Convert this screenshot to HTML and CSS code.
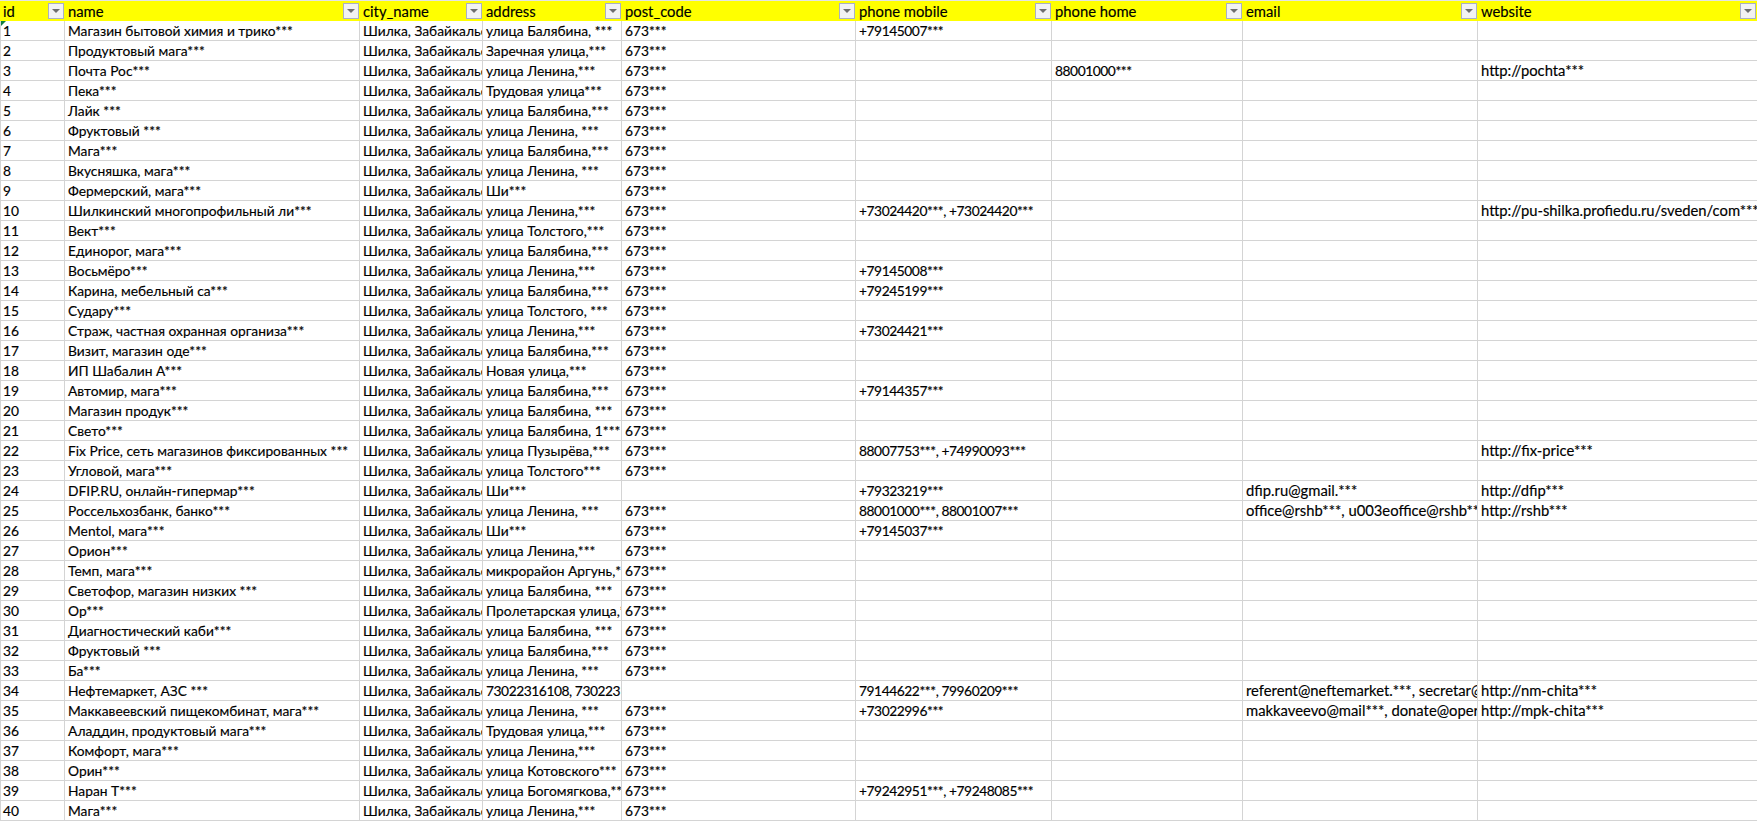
FILE: index.html
```html
<!DOCTYPE html>
<html lang="ru">
<head>
<meta charset="utf-8">
<title>Лист</title>
<link rel="stylesheet" href="styles.css">
</head>
<body>
<table class="sheet">
<colgroup><col class="c-id"><col class="c-name"><col class="c-city"><col class="c-addr"><col class="c-post"><col class="c-mob"><col class="c-home"><col class="c-mail"><col class="c-web"></colgroup>
<thead><tr>
<th><div class="hd"><span>id</span><i class="fb"></i></div></th>
<th><div class="hd"><span>name</span><i class="fb"></i></div></th>
<th><div class="hd"><span>city_name</span><i class="fb"></i></div></th>
<th><div class="hd"><span>address</span><i class="fb"></i></div></th>
<th><div class="hd"><span>post_code</span><i class="fb"></i></div></th>
<th><div class="hd"><span>phone mobile</span><i class="fb"></i></div></th>
<th><div class="hd"><span>phone home</span><i class="fb"></i></div></th>
<th><div class="hd"><span>email</span><i class="fb"></i></div></th>
<th><div class="hd"><span>website</span><i class="fb"></i></div></th>
</tr></thead>
<tbody>
<tr><td class="first">1<i class="mark"></i></td><td>Магазин бытовой химия и трико***</td><td>Шилка, Забайкальский край</td><td>улица Балябина, ***</td><td>673***</td><td>+79145007***</td><td></td><td></td><td></td></tr>
<tr><td>2</td><td>Продуктовый мага***</td><td>Шилка, Забайкальский край</td><td>Заречная улица,***</td><td>673***</td><td></td><td></td><td></td><td></td></tr>
<tr><td>3</td><td>Почта Рос***</td><td>Шилка, Забайкальский край</td><td>улица Ленина,***</td><td>673***</td><td></td><td>88001000***</td><td></td><td>http://pochta***</td></tr>
<tr><td>4</td><td>Пека***</td><td>Шилка, Забайкальский край</td><td>Трудовая улица***</td><td>673***</td><td></td><td></td><td></td><td></td></tr>
<tr><td>5</td><td>Лайк ***</td><td>Шилка, Забайкальский край</td><td>улица Балябина,***</td><td>673***</td><td></td><td></td><td></td><td></td></tr>
<tr><td>6</td><td>Фруктовый ***</td><td>Шилка, Забайкальский край</td><td>улица Ленина, ***</td><td>673***</td><td></td><td></td><td></td><td></td></tr>
<tr><td>7</td><td>Мага***</td><td>Шилка, Забайкальский край</td><td>улица Балябина,***</td><td>673***</td><td></td><td></td><td></td><td></td></tr>
<tr><td>8</td><td>Вкусняшка, мага***</td><td>Шилка, Забайкальский край</td><td>улица Ленина, ***</td><td>673***</td><td></td><td></td><td></td><td></td></tr>
<tr><td>9</td><td>Фермерский, мага***</td><td>Шилка, Забайкальский край</td><td>Ши***</td><td>673***</td><td></td><td></td><td></td><td></td></tr>
<tr><td>10</td><td>Шилкинский многопрофильный ли***</td><td>Шилка, Забайкальский край</td><td>улица Ленина,***</td><td>673***</td><td>+73024420***, +73024420***</td><td></td><td></td><td>http://pu-shilka.profiedu.ru/sveden/com***</td></tr>
<tr><td>11</td><td>Вект***</td><td>Шилка, Забайкальский край</td><td>улица Толстого,***</td><td>673***</td><td></td><td></td><td></td><td></td></tr>
<tr><td>12</td><td>Единорог, мага***</td><td>Шилка, Забайкальский край</td><td>улица Балябина,***</td><td>673***</td><td></td><td></td><td></td><td></td></tr>
<tr><td>13</td><td>Восьмёро***</td><td>Шилка, Забайкальский край</td><td>улица Ленина,***</td><td>673***</td><td>+79145008***</td><td></td><td></td><td></td></tr>
<tr><td>14</td><td>Карина, мебельный са***</td><td>Шилка, Забайкальский край</td><td>улица Балябина,***</td><td>673***</td><td>+79245199***</td><td></td><td></td><td></td></tr>
<tr><td>15</td><td>Судару***</td><td>Шилка, Забайкальский край</td><td>улица Толстого, ***</td><td>673***</td><td></td><td></td><td></td><td></td></tr>
<tr><td>16</td><td>Страж, частная охранная организа***</td><td>Шилка, Забайкальский край</td><td>улица Ленина,***</td><td>673***</td><td>+73024421***</td><td></td><td></td><td></td></tr>
<tr><td>17</td><td>Визит, магазин оде***</td><td>Шилка, Забайкальский край</td><td>улица Балябина,***</td><td>673***</td><td></td><td></td><td></td><td></td></tr>
<tr><td>18</td><td>ИП Шабалин А***</td><td>Шилка, Забайкальский край</td><td>Новая улица,***</td><td>673***</td><td></td><td></td><td></td><td></td></tr>
<tr><td>19</td><td>Автомир, мага***</td><td>Шилка, Забайкальский край</td><td>улица Балябина,***</td><td>673***</td><td>+79144357***</td><td></td><td></td><td></td></tr>
<tr><td>20</td><td>Магазин продук***</td><td>Шилка, Забайкальский край</td><td>улица Балябина, ***</td><td>673***</td><td></td><td></td><td></td><td></td></tr>
<tr><td>21</td><td>Свето***</td><td>Шилка, Забайкальский край</td><td>улица Балябина, 1***</td><td>673***</td><td></td><td></td><td></td><td></td></tr>
<tr><td>22</td><td>Fix Price, сеть магазинов фиксированных ***</td><td>Шилка, Забайкальский край</td><td>улица Пузырёва,***</td><td>673***</td><td>88007753***, +74990093***</td><td></td><td></td><td>http://fix-price***</td></tr>
<tr><td>23</td><td>Угловой, мага***</td><td>Шилка, Забайкальский край</td><td>улица Толстого***</td><td>673***</td><td></td><td></td><td></td><td></td></tr>
<tr><td>24</td><td>DFIP.RU, онлайн-гипермар***</td><td>Шилка, Забайкальский край</td><td>Ши***</td><td></td><td>+79323219***</td><td></td><td>dfip.ru@gmail.***</td><td>http://dfip***</td></tr>
<tr><td>25</td><td>Россельхозбанк, банко***</td><td>Шилка, Забайкальский край</td><td>улица Ленина, ***</td><td>673***</td><td>88001000***, 88001007***</td><td></td><td>office@rshb***, u003eoffice@rshb***</td><td>http://rshb***</td></tr>
<tr><td>26</td><td>Mentol, мага***</td><td>Шилка, Забайкальский край</td><td>Ши***</td><td>673***</td><td>+79145037***</td><td></td><td></td><td></td></tr>
<tr><td>27</td><td>Орион***</td><td>Шилка, Забайкальский край</td><td>улица Ленина,***</td><td>673***</td><td></td><td></td><td></td><td></td></tr>
<tr><td>28</td><td>Темп, мага***</td><td>Шилка, Забайкальский край</td><td>микрорайон Аргунь,***</td><td>673***</td><td></td><td></td><td></td><td></td></tr>
<tr><td>29</td><td>Светофор, магазин низких ***</td><td>Шилка, Забайкальский край</td><td>улица Балябина, ***</td><td>673***</td><td></td><td></td><td></td><td></td></tr>
<tr><td>30</td><td>Ор***</td><td>Шилка, Забайкальский край</td><td>Пролетарская улица,***</td><td>673***</td><td></td><td></td><td></td><td></td></tr>
<tr><td>31</td><td>Диагностический каби***</td><td>Шилка, Забайкальский край</td><td>улица Балябина, ***</td><td>673***</td><td></td><td></td><td></td><td></td></tr>
<tr><td>32</td><td>Фруктовый ***</td><td>Шилка, Забайкальский край</td><td>улица Балябина,***</td><td>673***</td><td></td><td></td><td></td><td></td></tr>
<tr><td>33</td><td>Ба***</td><td>Шилка, Забайкальский край</td><td>улица Ленина, ***</td><td>673***</td><td></td><td></td><td></td><td></td></tr>
<tr><td>34</td><td>Нефтемаркет, АЗС ***</td><td>Шилка, Забайкальский край</td><td class="num">73022316108, 73022316108</td><td></td><td>79144622***, 79960209***</td><td></td><td>referent@neftemarket.***, secretar@neftemarket.***</td><td>http://nm-chita***</td></tr>
<tr><td>35</td><td>Маккавеевский пищекомбинат, мага***</td><td>Шилка, Забайкальский край</td><td>улица Ленина, ***</td><td>673***</td><td>+73022996***</td><td></td><td>makkaveevo@mail***, donate@operator.***</td><td>http://mpk-chita***</td></tr>
<tr><td>36</td><td>Аладдин, продуктовый мага***</td><td>Шилка, Забайкальский край</td><td>Трудовая улица,***</td><td>673***</td><td></td><td></td><td></td><td></td></tr>
<tr><td>37</td><td>Комфорт, мага***</td><td>Шилка, Забайкальский край</td><td>улица Ленина,***</td><td>673***</td><td></td><td></td><td></td><td></td></tr>
<tr><td>38</td><td>Орин***</td><td>Шилка, Забайкальский край</td><td>улица Котовского***</td><td>673***</td><td></td><td></td><td></td><td></td></tr>
<tr><td>39</td><td>Наран Т***</td><td>Шилка, Забайкальский край</td><td>улица Богомягкова,***</td><td>673***</td><td>+79242951***, +79248085***</td><td></td><td></td><td></td></tr>
<tr><td>40</td><td>Мага***</td><td>Шилка, Забайкальский край</td><td>улица Ленина,***</td><td>673***</td><td></td><td></td><td></td><td></td></tr>
</tbody>
</table>
</body>
</html>
```
FILE: styles.css
```css
* { box-sizing: border-box; }
html, body { margin: 0; background: #fff; }
body { overflow: hidden; }
.sheet {
  table-layout: fixed;
  width: 1757px;
  border-collapse: separate;
  border-spacing: 0;
  font-family: "Lato", "Open Sans", "Noto Sans", sans-serif;
  font-size: 13.8px;
  color: #000;
  -webkit-text-stroke: 0.15px #000;
}
.c-id { width: 65px; }
.c-name { width: 295px; }
.c-city { width: 123px; }
.c-addr { width: 139px; }
.c-post { width: 234px; }
.c-mob { width: 196px; }
.c-home { width: 191px; }
.c-mail { width: 235px; }
.c-web { width: 279px; }
th {
  height: 21px;
  padding: 0;
  background: #ffff00;
  border-top: 1px solid #e4e4e4;
  font-size: 14.8px;
  font-weight: 400;
  text-align: left;
}
.hd {
  display: flex;
  align-items: center;
  justify-content: space-between;
  height: 20px;
  padding: 0 1px 0 3px;
}
.fb {
  display: flex;
  align-items: center;
  justify-content: center;
  width: 16px;
  height: 16px;
  background: #f2f2f2;
  border: 1px solid #a9b0c4;
}
.fb::before {
  content: "";
  border-top: 4px solid #6e6e6e;
  border-left: 4px solid transparent;
  border-right: 4px solid transparent;
}
td {
  height: 20px;
  padding: 0 0 0 3px;
  border-right: 1px solid #d4d4d4;
  border-bottom: 1px solid #d4d4d4;
  white-space: nowrap;
  overflow: hidden;
  line-height: 19px;
}
td:nth-child(6), td:nth-child(7), td.num { letter-spacing: -0.45px; }
td:nth-child(8), td:nth-child(9) { font-size: 14.8px; }
td:first-child { border-left: 1px solid #d4d4d4; padding-left: 2px; }
td:last-child { border-right: 0; }
.first { position: relative; }
.mark {
  position: absolute;
  left: 0;
  top: 0;
  border-top: 5px solid #107c41;
  border-right: 5px solid transparent;
}
```
